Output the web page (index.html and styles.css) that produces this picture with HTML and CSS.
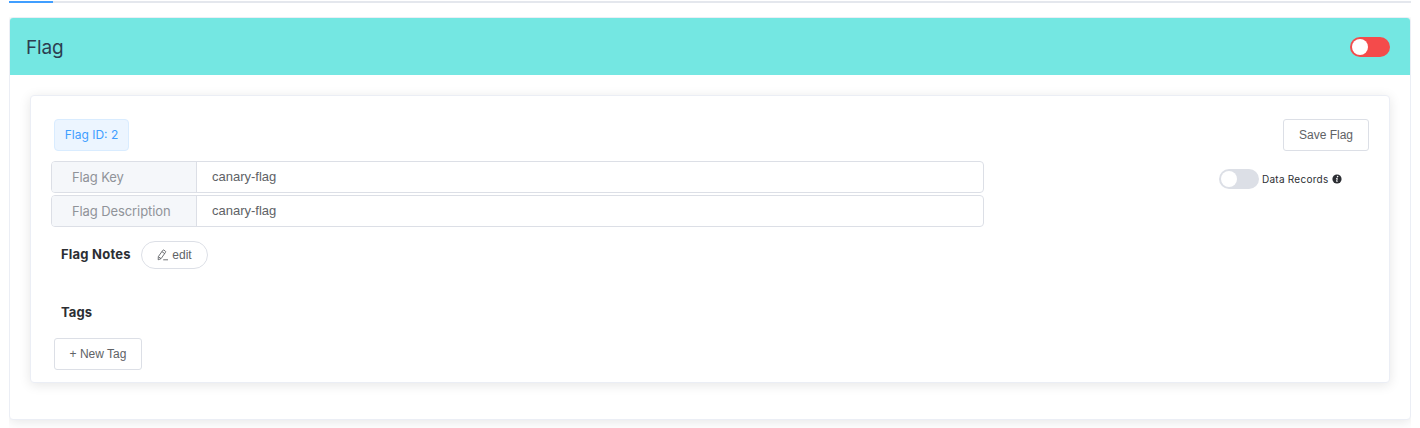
FILE: index.html
```html
<!DOCTYPE html>
<html lang="en">
<head>
<meta charset="utf-8">
<title>Flag</title>
<link rel="stylesheet" href="styles.css">
</head>
<body>
<div class="tabs-line"><div class="tabs-active"></div></div>
<main class="content">
  <section class="card outer">
    <header class="card-header">
      <h2 class="title">Flag</h2>
      <span class="switch switch-off-red"></span>
    </header>
    <div class="card-body">
      <div class="card inner">
        <div class="row top-row">
          <span class="id-tag">Flag ID: 2</span>
          <button class="button save">Save Flag</button>
        </div>
        <div class="row details">
          <div class="fields">
            <div class="field"><label class="prepend">Flag Key</label><div class="value">canary-flag</div></div>
            <div class="field"><label class="prepend">Flag Description</label><div class="value">canary-flag</div></div>
          </div>
          <div class="records">
            <span class="switch"></span>
            <span class="records-label">Data Records</span>
            <svg class="info" viewBox="0 0 10 10"><circle cx="5" cy="5" r="4.6" fill="#2c2e33"/><circle cx="5.6" cy="2.6" r=".8" fill="#fff"/><path d="M4.1 4.4h1.2L4.6 7.4h1" fill="none" stroke="#fff" stroke-width="1"/></svg>
          </div>
        </div>
        <div class="notes">
          <h5 class="heading notes-heading">Flag Notes</h5>
          <button class="button edit"><svg class="pencil" viewBox="0 0 12 12" fill="none" stroke="#606266" stroke-width=".9" stroke-linejoin="round"><path d="M1.3 7.7 5.8 1.3Q6.3.7 7 1.2L8.4 2.2Q9 2.7 8.5 3.3L4.1 9.6 1.2 10.8ZM4.9 2.6 7.6 4.5M1.5 7.8 4 9.6M6.2 10.8h4.8"/></svg><span>edit</span></button>
        </div>
        <h5 class="heading tags">Tags</h5>
        <button class="button new-tag">+ New Tag</button>
      </div>
    </div>
  </section>
</main>
</body>
</html>
```
FILE: styles.css
```css
* { box-sizing: border-box; }
html { overflow: hidden; }
body { margin: 0; padding: 1px 9px 0; height: 428px; overflow: hidden; background: #fff; color: #2c2e33; font-family: Inter, "Liberation Sans", sans-serif; }
h2, h5 { margin: 0; }
.tabs-line { height: 2px; background: #e4e7ed; }
.tabs-active { width: 44px; height: 2px; background: #409eff; }
.content { margin-top: 14px; height: 411px; overflow: hidden; }
.card { border: 1px solid #ebeef5; border-radius: 4px; background: #fff; box-shadow: 0 2px 12px rgba(0, 0, 0, .1); }
.outer { height: 403px; overflow: hidden; }
.card-header { height: 57px; padding: 0 20px 0 16px; display: flex; align-items: center; justify-content: space-between; background: #74e7e2; }
.title { color: #2c3e50; font-size: 19px; font-weight: 400; line-height: 24px; letter-spacing: -.2px; padding-top: 2px; }
.switch { position: relative; width: 40px; height: 20px; border-radius: 10px; background: #dcdfe6; flex: none; }
.switch::after { content: ""; position: absolute; left: 2px; top: 2px; width: 16px; height: 16px; border-radius: 50%; background: #fff; }
.switch-off-red { background: #f44b4b; }
.card-body { padding: 20px; }
.inner { height: 288px; padding: 23px 20px 0; }
.row { display: flex; justify-content: space-between; }
.id-tag { margin-left: 3px; width: 75px; height: 32px; border: 1px solid #d9ecff; border-radius: 4px; background: #ecf5ff; color: #409eff; font-size: 12px; line-height: 30px; text-align: center; white-space: nowrap; }
.button { height: 32px; padding: 0; border: 1px solid #dcdfe6; border-radius: 3px; background: #fff; color: #606266; font: 12px "Liberation Sans", Arial, sans-serif; }
.save { width: 86px; }
.details { margin-top: 10px; }
.fields { display: grid; gap: 2px; width: 933px; }
.field { display: flex; height: 32px; border: 1px solid #dcdfe6; border-radius: 4px; background: #fff; overflow: hidden; line-height: 30px; }
.prepend { width: 145px; padding-left: 20px; border-right: 1px solid #dcdfe6; background: #f5f7fa; color: #909399; font-size: 13px; line-height: 31px; letter-spacing: -.1px; }
.value { padding-left: 15px; color: #606266; font: 13px/30px "Liberation Sans", Arial, sans-serif; }
.records { display: flex; align-items: center; height: 20px; margin: 8px 27px 0 0; }
.records-label { width: 67px; margin-left: 3px; font-size: 10px; letter-spacing: .25px; white-space: nowrap; }
.info { width: 10px; height: 10px; margin-left: 3px; }
.notes { display: flex; align-items: center; height: 28px; margin: 14px 0 0 10px; }
.heading { font-size: 13px; font-weight: 700; line-height: 16px; }
.notes-heading { width: 70px; padding-bottom: 2px; letter-spacing: .22px; white-space: nowrap; }
.edit { width: 67px; height: 28px; margin-left: 10px; border-radius: 14px; display: flex; align-items: center; justify-content: center; gap: 3px; }
.pencil { width: 12px; height: 12px; }
.tags { margin: 35px 0 0 10px; letter-spacing: .1px; }
.new-tag { display: block; width: 88px; margin: 18px 0 0 3px; }
```
